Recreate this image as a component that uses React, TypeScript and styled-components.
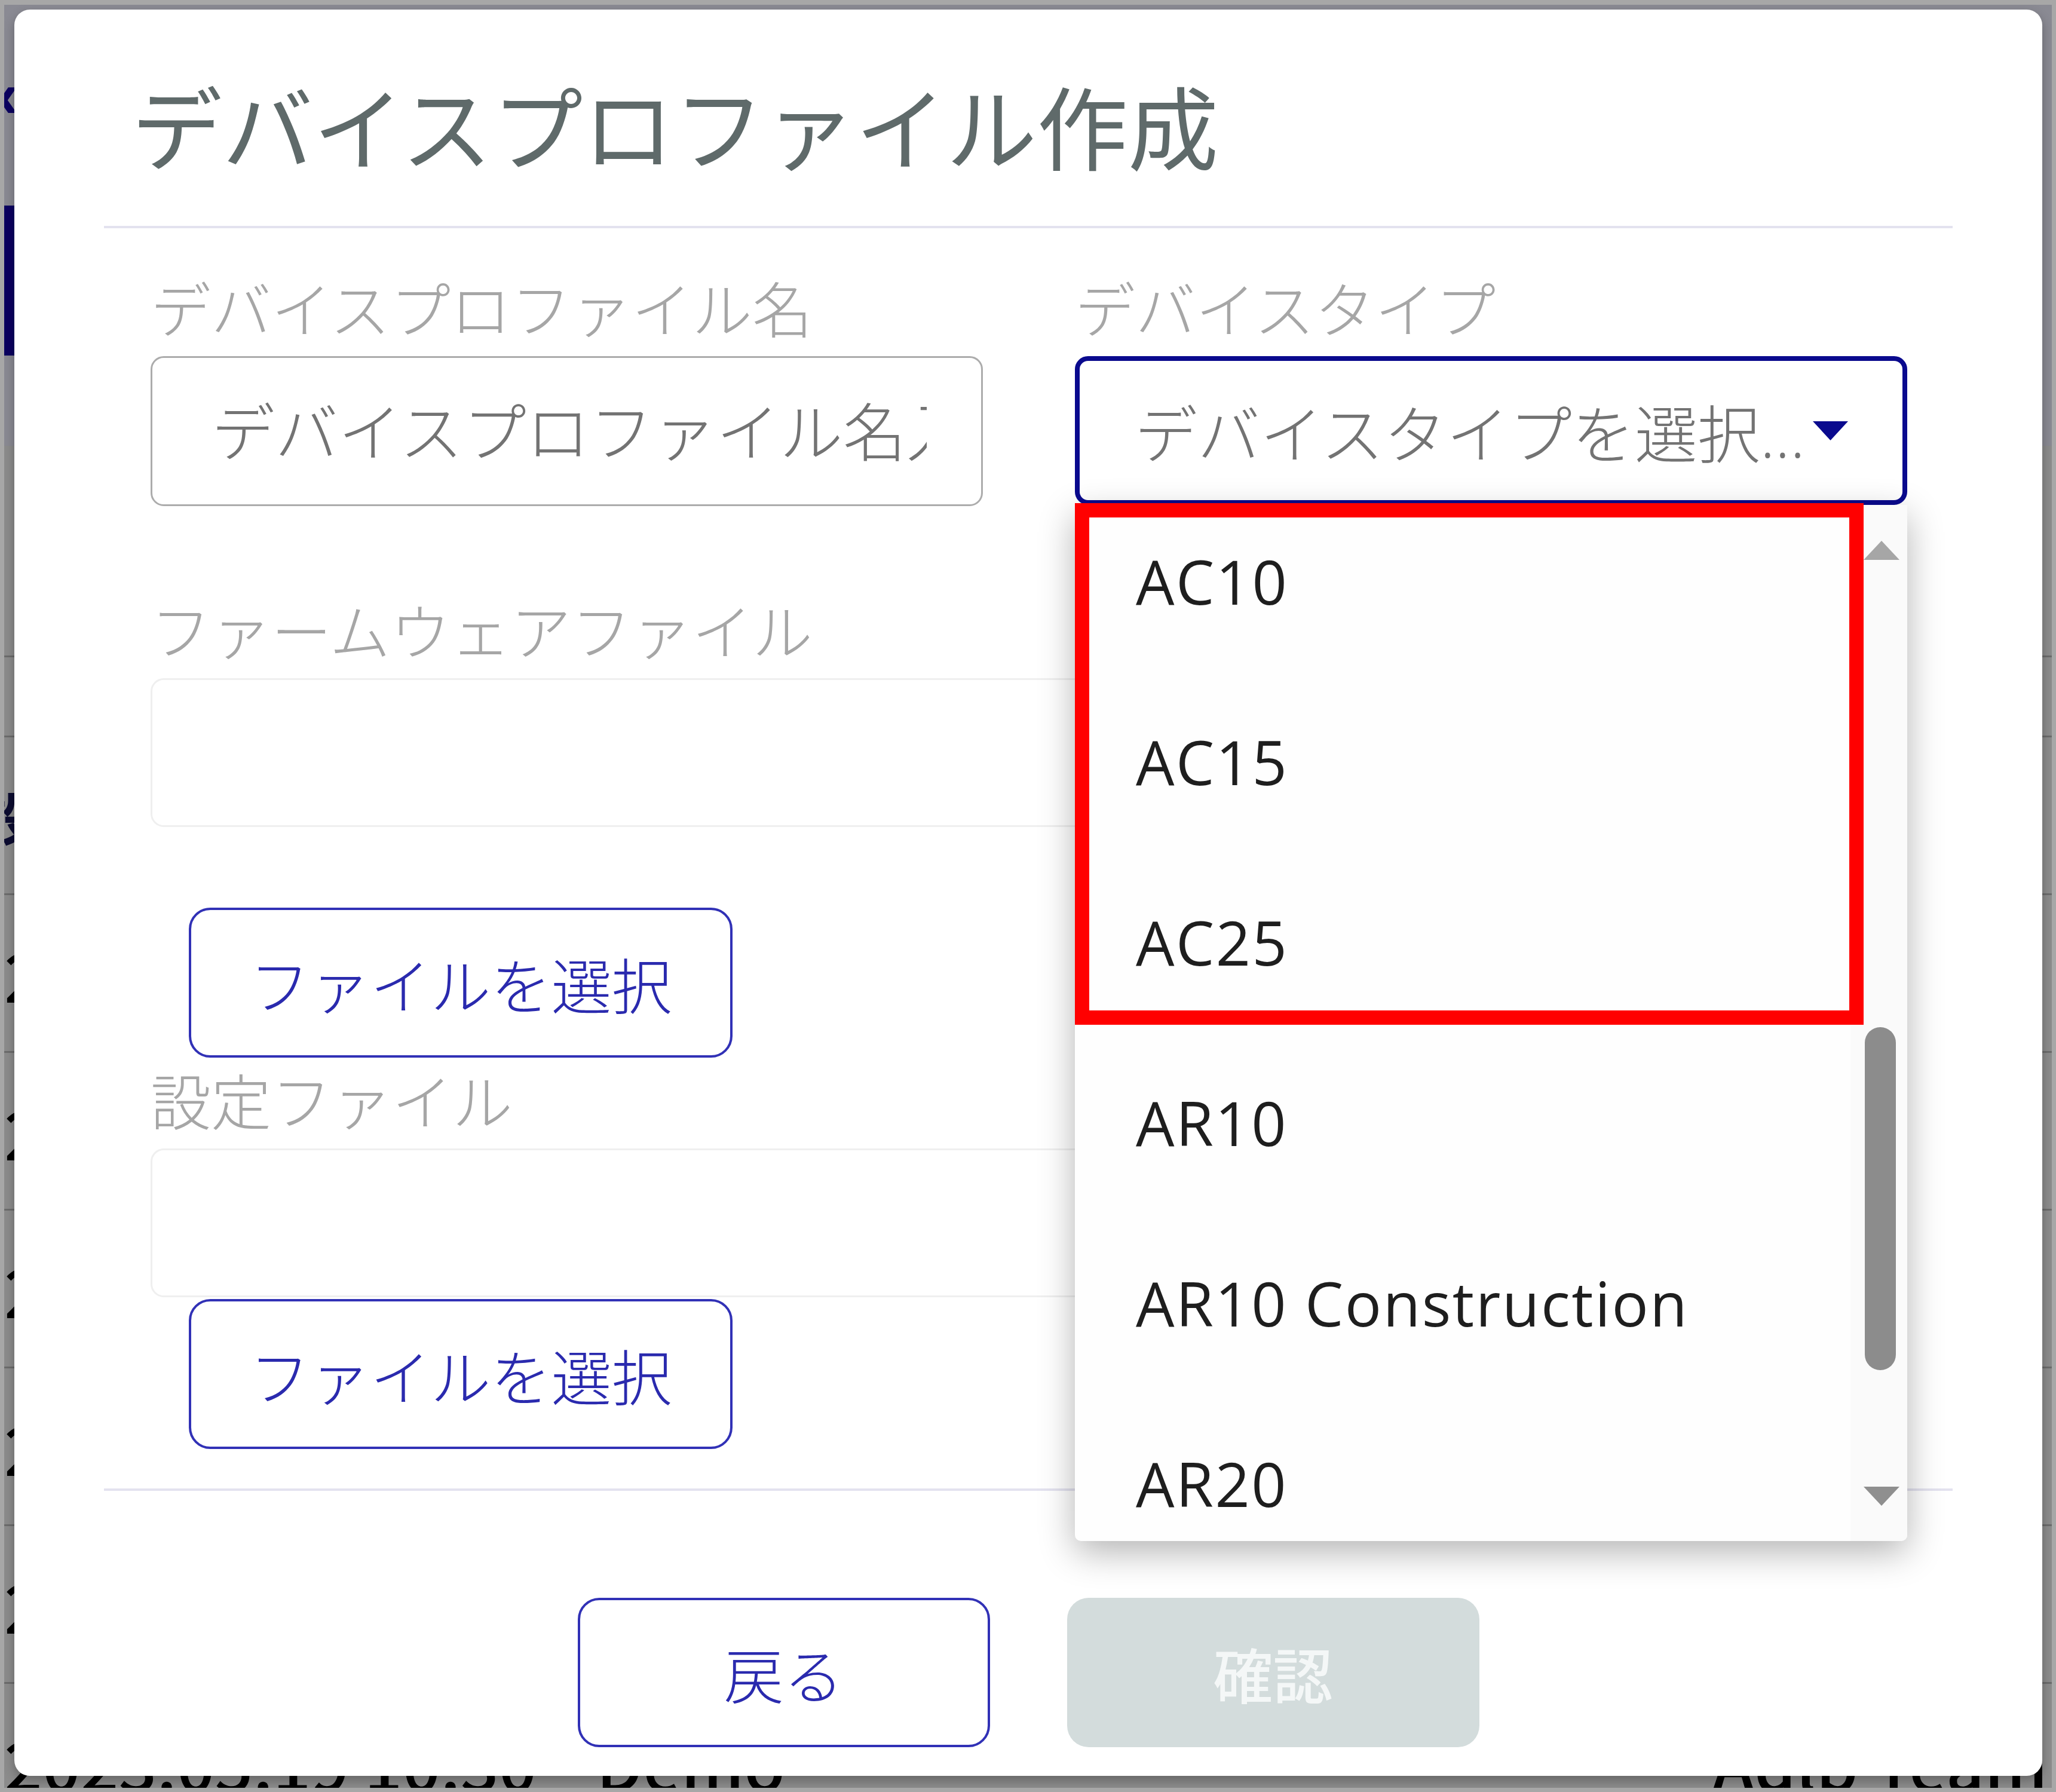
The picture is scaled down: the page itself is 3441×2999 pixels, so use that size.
import styled, { createGlobalStyle } from 'styled-components'

const GlobalStyle = createGlobalStyle`
    html, body {
        margin: 0;
        padding: 0;
    }
    body {
        font-family: "Open Sans", "Noto Sans CJK JP", sans-serif;
    }
    * {
        box-sizing: border-box;
    }
`

const deviceTypes = ['AC10', 'AC15', 'AC25', 'AR10', 'AR10 Construction', 'AR20']
const historyRows = ['2023.05.19 10:30', '2023.05.19 10:30', '2023.05.19 10:30', '2023.05.19 10:30', '2023.05.19 10:30', '2023.05.19 10:30']

const Caret = ({ color, up }: { color: string, up?: boolean }) => (
    <svg width="60" height="32" viewBox="0 0 60 32">
        <polygon points={up ? '30,0 60,32 0,32' : '0,0 60,0 30,32'} fill={color} />
    </svg>
)

const App = () => {
    return (<Page>
        <GlobalStyle />
        <Screen>
            <TopBand>
                <NavChevron>‹</NavChevron>
                <NavActive />
            </TopBand>
            <TableRow $height={354} />
            <TableRow $height={134} />
            <TableRow $height={264}>
                <HeaderCell>設定日時</HeaderCell>
            </TableRow>
            {historyRows.map((date, i) => (
                <TableRow key={i} $height={264}>
                    <Cell>{date}</Cell>
                    <Cell>Demo</Cell>
                    <Cell>Adlp Team</Cell>
                </TableRow>
            ))}

            <Modal>
                <Title>デバイスプロファイル作成</Title>
                <Divider />
                <Form>
                    <TopRow>
                        <Field>
                            <Label>デバイスプロファイル名</Label>
                            <TextInput placeholder="デバイスプロファイル名入力" />
                        </Field>
                        <Field>
                            <Label>デバイスタイプ</Label>
                            <SelectWrap>
                                <SelectBox>
                                    <SelectText>デバイスタイプを選択...</SelectText>
                                    <svg width="59" height="32" viewBox="0 0 59 32">
                                        <polygon points="0,0 59,0 29.5,32" fill="#0a0a8e" />
                                    </svg>
                                </SelectBox>
                                <Dropdown>
                                    <OptionViewport>
                                        <OptionList>
                                            {deviceTypes.map(t => <OptionItem key={t}>{t}</OptionItem>)}
                                        </OptionList>
                                    </OptionViewport>
                                    <ScrollTrack>
                                        <Caret up color="#a6a6a6" />
                                        <Thumb />
                                        <Caret color="#8f8f8f" />
                                    </ScrollTrack>
                                    <Highlight />
                                </Dropdown>
                            </SelectWrap>
                        </Field>
                    </TopRow>

                    <Label $gap={150}>ファームウェアファイル</Label>
                    <FileBox />
                    <FileButton $gap={135}>ファイルを選択</FileButton>

                    <Label $gap={14}>設定ファイル</Label>
                    <FileBox />
                    <FileButton $gap={3}>ファイルを選択</FileButton>
                </Form>
                <Divider $gap={66} />
                <Footer>
                    <FooterButton>戻る</FooterButton>
                    <FooterButton $primary disabled>確認</FooterButton>
                </Footer>
            </Modal>
        </Screen>
    </Page>)
}

const Page = styled.div`
    width: 3441px;
    height: 2999px;
    background: #a7a7a7;
    padding: 8px 7px 7px 7px;
`
const Screen = styled.div`
    position: relative;
    height: 100%;
    overflow: hidden;
    background: #8c8c8c;
    display: flex;
    flex-direction: column;
`
const TopBand = styled.div`
    height: 738px;
    flex-shrink: 0;
    background: #8a8a93;
    display: flex;
    flex-direction: column;
    padding-top: 96px;
`
const NavChevron = styled.div`
    font-family: "Liberation Sans", sans-serif;
    font-size: 110px;
    font-weight: bold;
    line-height: 110px;
    color: #0b0060;
    margin-left: -12px;
`
const NavActive = styled.div`
    width: 300px;
    height: 251px;
    margin-top: 130px;
    background: #0b0060;
`
const TableRow = styled.div<{ $height: number }>`
    height: ${p => p.$height}px;
    flex-shrink: 0;
    border-bottom: 3px solid #6c6c6c;
    display: grid;
    grid-template-columns: 991px 1868px auto;
    align-items: center;
`
const HeaderCell = styled.div`
    font-family: "Noto Sans CJK JP", sans-serif;
    font-size: 96px;
    font-weight: bold;
    color: #0c0c30;
    margin-left: -40px;
`
const Cell = styled.div`
    font-family: "Noto Sans CJK JP", sans-serif;
    font-size: 112px;
    font-weight: 500;
    color: #000;
    white-space: nowrap;
`

const Modal = styled.div`
    position: absolute;
    left: 17px;
    top: 8px;
    width: 3394px;
    height: 2956px;
    background: #fff;
    border-radius: 26px;
    box-shadow: 0 8px 18px rgba(0, 0, 0, 0.28);
    padding: 101px 150px 0 150px;
    display: flex;
    flex-direction: column;
`
const Title = styled.h1`
    margin: 0;
    padding-left: 46px;
    font-family: "Noto Sans CJK JP", sans-serif;
    font-size: 152px;
    line-height: 182px;
    font-weight: 400;
    color: #5f6a6a;
`
const Divider = styled.div<{ $gap?: number }>`
    height: 4px;
    flex-shrink: 0;
    margin-top: ${p => p.$gap ?? 79}px;
    background: #e3e2ef;
`
const Form = styled.div`
    padding: 0 76px 0 78px;
    display: flex;
    flex-direction: column;
    align-items: flex-start;
`
const TopRow = styled.div`
    width: 100%;
    display: grid;
    grid-template-columns: 1393px 1393px;
    column-gap: 154px;
    align-items: start;
    margin-top: 76px;
    position: relative;
    z-index: 2;
`
const Field = styled.div`
    display: flex;
    flex-direction: column;
`
const Label = styled.div<{ $gap?: number }>`
    margin-top: ${p => p.$gap ?? 0}px;
    margin-bottom: 18px;
    font-size: 101px;
    line-height: 120px;
    font-weight: 300;
    color: #a6a6a6;
    white-space: nowrap;
`
const TextInput = styled.input`
    height: 251px;
    width: 100%;
    border: 3px solid #acacac;
    border-radius: 22px;
    padding: 0 91px 0 99px;
    font-family: "Open Sans", "Noto Sans CJK JP", sans-serif;
    font-size: 106px;
    font-weight: 300;
    color: #333;
    background: #fff;
    outline: none;
    &::placeholder {
        color: #737373;
    }
`
const SelectWrap = styled.div`
    position: relative;
`
const SelectBox = styled.div`
    height: 249px;
    border: 8px solid #0a0a8e;
    border-radius: 22px;
    padding: 0 91px 0 92px;
    display: flex;
    align-items: center;
    justify-content: space-between;
    background: #fff;
`
const SelectText = styled.span`
    font-size: 105px;
    font-weight: 300;
    color: #737373;
    white-space: nowrap;
`
const Dropdown = styled.div`
    position: absolute;
    top: 100%;
    left: 0;
    width: 1393px;
    height: 1734px;
    display: flex;
    background: #fefefe;
    border-radius: 0 0 10px 10px;
    box-shadow: 0 18px 60px rgba(0, 0, 0, 0.3);
`
const OptionViewport = styled.div`
    flex: 1;
    overflow: hidden;
`
const OptionList = styled.ul`
    list-style: none;
    margin: -24px 0 0 0;
    padding: 0;
`
const OptionItem = styled.li`
    height: 302px;
    display: flex;
    align-items: center;
    padding-left: 102px;
    font-family: "Open Sans", sans-serif;
    font-size: 102px;
    letter-spacing: 2.5px;
    color: #1e1e1e;
    white-space: nowrap;
`
const ScrollTrack = styled.div`
    position: relative;
    width: 95px;
    background: #fafafa;
    border-radius: 0 0 10px 0;
    display: flex;
    flex-direction: column;
    align-items: center;
    justify-content: space-between;
    padding: 60px 0 59px 8px;
`
const Thumb = styled.div`
    position: absolute;
    left: 24px;
    top: 874px;
    width: 52px;
    height: 574px;
    border-radius: 26px;
    background: #8c8c8c;
`
const Highlight = styled.div`
    position: absolute;
    left: 0;
    top: -3px;
    width: 1320px;
    height: 873px;
    border: 24px solid #ff0000;
    pointer-events: none;
`
const FileBox = styled.div`
    width: 100%;
    height: 249px;
    border: 3px solid #efefef;
    border-radius: 22px;
`
const FileButton = styled.button<{ $gap: number }>`
    margin-top: ${p => p.$gap}px;
    margin-left: 64px;
    width: 910px;
    height: 251px;
    border: 4px solid #3131b6;
    border-radius: 36px;
    background: #fff;
    font-family: "Noto Sans CJK JP", sans-serif;
    font-size: 101px;
    font-weight: 300;
    color: #2a2aae;
    padding: 0;
`
const Footer = styled.div`
    margin-top: 179px;
    display: flex;
    justify-content: center;
    gap: 129px;
`
const FooterButton = styled.button<{ $primary?: boolean }>`
    width: 690px;
    height: 250px;
    border-radius: 36px;
    border: ${p => p.$primary ? 'none' : '4px solid #3131b6'};
    background: ${p => p.$primary ? '#d3dcdc' : '#fff'};
    color: ${p => p.$primary ? '#f4f7f7' : '#2a2aae'};
    font-family: "Noto Sans CJK JP", sans-serif;
    font-size: 100px;
    font-weight: ${p => p.$primary ? 500 : 300};
    padding: 0;
`

export default App
